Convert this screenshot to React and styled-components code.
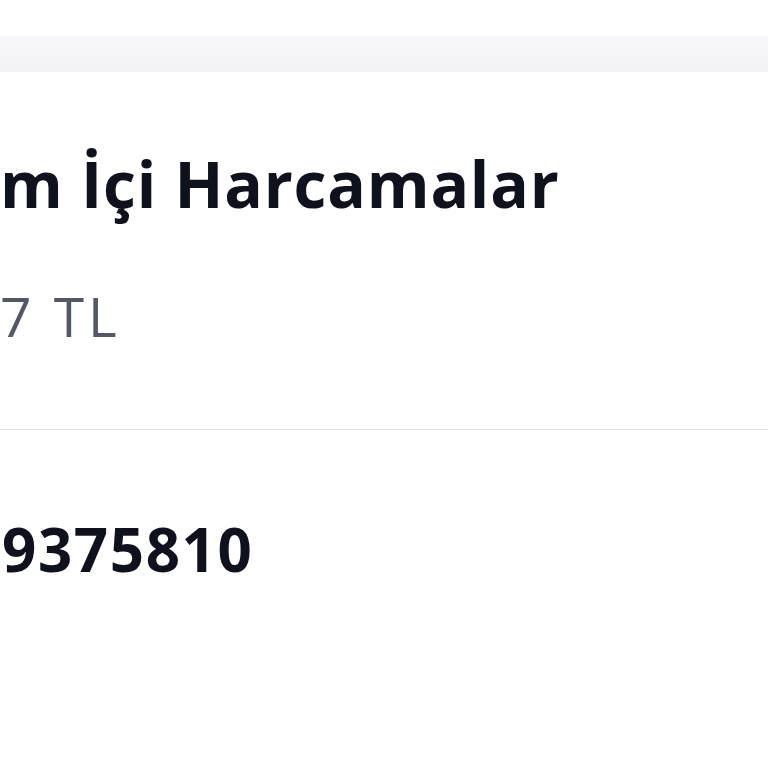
import React from 'react'
import styled, { createGlobalStyle } from 'styled-components'

const GlobalStyle = createGlobalStyle`
 html, body {
  margin: 0;
  padding: 0;
  background: #ffffff;
  font-family: "Open Sans", Lato, sans-serif;
  overflow: hidden;
 }
`

const Page = styled.div`
 width: 768px;
 height: 768px;
 display: flex;
 flex-direction: column;
 padding-top: 36px;
 box-sizing: border-box;
`

const TopBand = styled.div`
 height: 36px;
 background: linear-gradient(180deg, #f7f6fb 0%, #f3f3f7 100%);
`

const Section = styled.section`
 display: flex;
 flex-direction: column;
 padding: ${(p) => p.$pad};
 border-bottom: ${(p) => (p.$divider ? '1px solid #dedfe3' : 'none')};
`

const Title = styled.h1`
 margin: 0;
 font-size: 64px;
 font-weight: 700;
 line-height: 1;
 color: #0f111c;
 letter-spacing: 0.8px;
 white-space: nowrap;
`

const Amount = styled.div`
 font-size: 55px;
 font-weight: 400;
 line-height: 1;
 color: #545864;
 margin-top: 72px;
 letter-spacing: 4px;
 white-space: nowrap;
`

const Code = styled.div`
 font-size: 60px;
 font-weight: 700;
 line-height: 1;
 color: #0f111c;
 letter-spacing: 1.6px;
 white-space: nowrap;
`

export default function App() {
 return (
  <>
   <GlobalStyle />
   <Page>
    <TopBand />
    <Section $pad="80px 0 86px 0" $divider>
     <Title>m İçi Harcamalar</Title>
     <Amount>7 TL</Amount>
    </Section>
    <Section $pad="89px 0 0 2px">
     <Code>9375810</Code>
    </Section>
   </Page>
  </>
 )
}
